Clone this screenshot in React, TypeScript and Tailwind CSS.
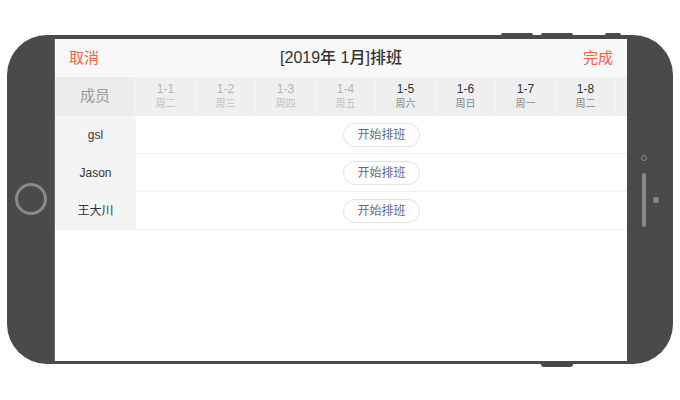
import React from 'react';

const days = [
  { d: '1-1', w: '周二', past: true },
  { d: '1-2', w: '周三', past: true },
  { d: '1-3', w: '周四', past: true },
  { d: '1-4', w: '周五', past: true },
  { d: '1-5', w: '周六', past: false },
  { d: '1-6', w: '周日', past: false },
  { d: '1-7', w: '周一', past: false },
  { d: '1-8', w: '周二', past: false },
];

const members = ['gsl', 'Jason', '王大川'];

const ScheduleScreen: React.FC = () => {
  return (
    <div className="w-[573px] h-[322px] bg-white border-l border-[#6a6a6a] overflow-hidden flex flex-col">
      {/* Header */}
      <div className="h-[38px] shrink-0 bg-[#f8f8f8] flex items-center justify-between px-[14px]">
        <span className="text-[15px] text-[#f2613d]">取消</span>
        <span className="text-[16px] text-[#333] font-medium">[2019年 1月]排班</span>
        <span className="text-[15px] text-[#f2613d]">完成</span>
      </div>

      <div className="h-[39px] shrink-0 flex bg-[#efefef]">
        <div className="w-[81px] shrink-0 flex items-center justify-center text-[15px] text-[#9a9a9a] bg-[#ececec] border-r border-[#f5f5f5]">
          成员
        </div>
        {days.map((day) => (
          <div
            key={day.d}
            className="w-[60px] shrink-0 flex flex-col items-center justify-center border-r border-[#f5f5f5]"
          >
            <span className={day.past ? 'text-[12px] leading-[15px] text-[#b3b3b3]' : 'text-[12px] leading-[15px] text-[#333]'}>
              {day.d}
            </span>
            <span className={day.past ? 'text-[10px] leading-[14px] text-[#c2c2c2]' : 'text-[10px] leading-[14px] text-[#888]'}>
              {day.w}
            </span>
          </div>
        ))}
        <div className="flex-1" />
      </div>

      {/* Member rows */}
      {members.map((m) => (
        <div key={m} className="h-[38px] shrink-0 flex border-b border-[#efefef]">
          <div className="w-[81px] shrink-0 bg-[#f4f4f4] flex items-center justify-center text-[12px] text-[#333]">
            {m}
          </div>
          <div className="flex-1 flex items-center justify-center">
            <button className="w-[77px] h-[24px] rounded-full border border-[#e2e2e2] bg-white text-[12px] text-[#5b6a92]">
              开始排班
            </button>
          </div>
        </div>
      ))}
    </div>
  );
};

export default function App() {
  return (
    <div
      className="w-[680px] h-[400px] bg-white pt-[35px] pl-[7px]"
      style={{ fontFamily: '"Liberation Sans", "Noto Sans CJK SC", sans-serif' }}
    >
      <div className="relative w-[666px] h-[329px] bg-[#4a4a4a] rounded-[40px] pt-[4px] pl-[47px]">
        {/* top side buttons */}
        <div className="absolute top-[-2px] left-[494px] w-[32px] h-[3px] bg-[#4a4a4a] rounded-t-[2px]" />
        <div className="absolute top-[-2px] left-[534px] w-[32px] h-[3px] bg-[#4a4a4a] rounded-t-[2px]" />
        <div className="absolute top-[-2px] left-[598px] w-[16px] h-[3px] bg-[#4a4a4a] rounded-t-[2px]" />
        {/* bottom button */}
        <div className="absolute bottom-[-3px] left-[534px] w-[32px] h-[4px] bg-[#4a4a4a] rounded-b-[3px]" />

        {/* home button */}
        <div className="absolute left-[8px] top-[148px] w-[32px] h-[32px] rounded-full border-[3px] border-[#8a8a8a]" />

        {/* right side: camera, speaker, sensor */}
        <div className="absolute left-[634px] top-[120px] w-[6px] h-[6px] rounded-full border-[1.5px] border-[#8a8a8a]" />
        <div className="absolute left-[635px] top-[138px] w-[4px] h-[54px] rounded-full bg-[#8a8a8a]" />
        <div className="absolute left-[646px] top-[162px] w-[6px] h-[6px] rounded-full bg-[#8a8a8a]" />

        <ScheduleScreen />
      </div>
    </div>
  );
}
